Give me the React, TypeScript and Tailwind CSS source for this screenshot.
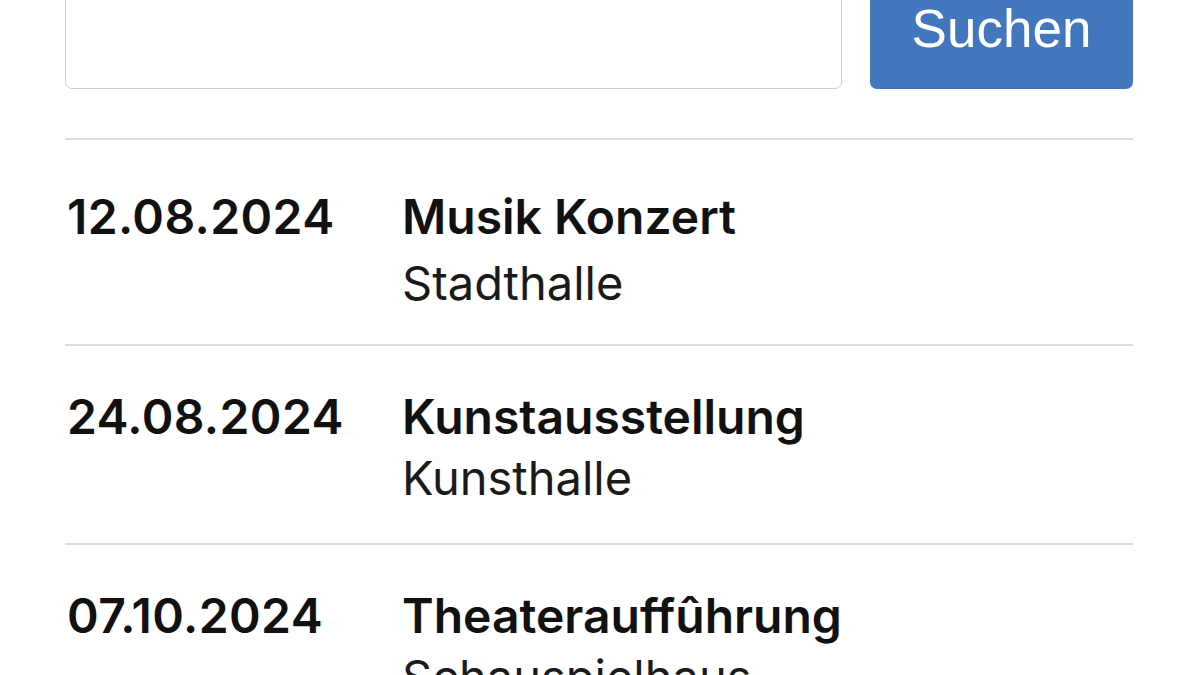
const events = [
  { date: "12.08.2024", title: "Musik Konzert", place: "Stadthalle" },
  { date: "24.08.2024", title: "Kunstausstellung", place: "Kunsthalle" },
  { date: "07.10.2024", title: "Theaterauffûhrung", place: "Schauspielhaus" },
];

export default function App() {
  return (
    <div className="h-[675px] w-[1200px] overflow-hidden bg-white pl-[65px] pr-[67px] font-['Inter',sans-serif] text-[#111]">
      <form className="-mt-[41px] flex h-[130px] gap-[28px]" onSubmit={(e) => e.preventDefault()}>
        <input
          type="text"
          aria-label="Suche"
          className="h-full flex-1 rounded-[7px] border border-[#cfcfcf] bg-white px-4 text-[40px] outline-none"
        />
        <button
          type="submit"
          className="h-full w-[263px] rounded-[7px] bg-[#4377bd] pt-[10px] font-['Liberation_Sans',Arial,sans-serif] text-[53px] text-white"
        >
          Suchen
        </button>
      </form>

      <ul className="mt-[49px] border-t-[2px] border-[#dcdcdc]">
        {events.map((ev, i) => (
          <li
            key={ev.date}
            className={
              i === 0
                ? "grid grid-cols-[337px_1fr] border-b-[2px] border-[#dcdcdc] pt-[46px] pb-[31px]"
                : "grid grid-cols-[337px_1fr] border-b-[2px] border-[#dcdcdc] pt-[40px] pb-[35px]"
            }
          >
            <div className="pl-[2px] text-[48px] leading-[62px] font-semibold tracking-[0.4px]">{ev.date}</div>
            <div>
              <div className="text-[48px] leading-[62px] font-semibold">{ev.title}</div>
              <div
                className={
                  i === 0
                    ? "mt-[5px] text-[47px] leading-[60px] font-normal text-[#1a1a1a]"
                    : "text-[47px] leading-[60px] font-normal text-[#1a1a1a]"
                }
              >
                {ev.place}
              </div>
            </div>
          </li>
        ))}
      </ul>
    </div>
  );
}
